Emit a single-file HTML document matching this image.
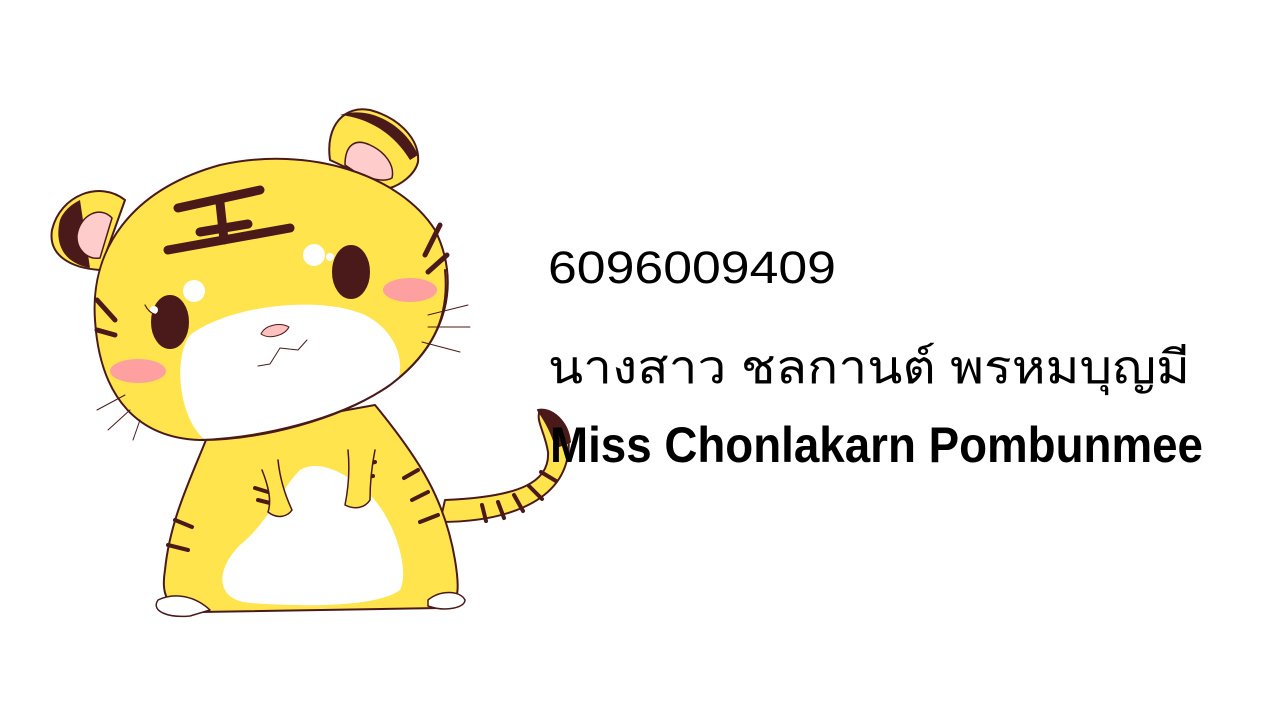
<!DOCTYPE html>
<html><head><meta charset="utf-8"><style>
html,body{margin:0;padding:0;background:#fff;width:1280px;height:720px;overflow:hidden}
</style></head><body>
<svg width="1280" height="720" viewBox="0 0 1280 720" xmlns="http://www.w3.org/2000/svg">
<g stroke="#4a1a1a" stroke-width="2" stroke-linejoin="round" stroke-linecap="round">
<!-- tail -->
<path d="M440 522 C500 522 560 505 568 455 C572 428 558 410 540 410 C535 420 545 432 548 452 C550 482 520 497 445 500 Z" fill="#ffe44d"/>
<path d="M538 410 C552 407 568 422 570 442 L556 447 C552 432 545 420 538 410Z" fill="#4a1a1a"/>
<g stroke-width="4">
<path d="M482 505 L486 521"/><path d="M498 502 L504 518"/><path d="M514 495 L523 511"/><path d="M529 486 L542 499"/><path d="M541 472 L556 481"/>
</g>
<!-- body -->
<path d="M208 435 C190 480 170 520 165 570 C160 600 170 610 200 612 L440 608 C460 606 460 590 455 560 C445 500 420 460 375 405 Z" fill="#ffe44d"/>
<path d="M300 470 C280 490 270 520 240 545 C215 570 215 600 250 603 C320 608 380 605 400 590 C410 570 395 520 370 495 C350 475 320 458 300 470Z" fill="#fff" stroke="none"/>
<g stroke-width="4">
<path d="M168 545 L188 550"/><path d="M175 520 L192 527"/>
<path d="M418 470 L404 478"/><path d="M428 492 L412 500"/><path d="M438 515 L420 522"/>
<path d="M255 488 L268 492"/><path d="M258 500 L270 503"/><path d="M362 465 L375 462"/><path d="M360 478 L373 476"/>
</g>
<path d="M262 470 C268 485 272 500 268 512 C278 520 288 516 292 510 C285 495 280 480 278 460" fill="#ffe44d" stroke-width="1.5"/>
<path d="M348 450 C350 470 348 490 345 505 C355 510 365 508 370 500 C370 480 372 465 375 450" fill="#ffe44d" stroke-width="1.5"/>
<path d="M158 600 C150 612 170 618 190 616 L210 610 C195 596 175 592 158 600Z" fill="#fff" stroke-width="1.5"/>
<path d="M428 606 C445 612 465 608 465 600 C460 590 440 590 428 600Z" fill="#fff" stroke-width="1.5"/>
<!-- ears -->
<path d="M125 200 C100 180 60 195 52 230 C48 255 70 268 100 270 Z" fill="#ffe44d"/>
<path d="M60 220 C55 240 60 262 90 268 L80 200 C70 205 63 212 60 220Z" fill="#4a1a1a" stroke="none"/>
<path d="M112 218 C100 205 80 215 77 235 C76 250 88 260 100 258 Z" fill="#ffcccc" stroke-width="1.5"/>
<path d="M330 160 C325 125 345 105 370 110 C400 118 420 140 418 162 C415 175 400 185 390 188 Z" fill="#ffe44d"/>
<path d="M340 115 C370 105 405 125 418 155 L410 160 C395 135 370 118 340 115Z" fill="#4a1a1a" stroke="none"/>
<path d="M345 165 C345 145 355 138 370 145 C385 152 395 165 392 178 C385 182 375 180 360 175Z" fill="#ffcccc" stroke-width="1.5"/>
<!-- head -->
<path d="M95 320 C90 250 130 190 220 165 C310 145 400 175 435 230 C460 280 450 340 390 385 C340 420 260 440 200 440 C140 438 100 400 95 320Z" fill="#ffe44d"/>
<path d="M190 335 C230 305 320 295 365 315 C395 330 405 360 398 380 C360 410 300 430 205 440 C180 420 172 360 190 335Z" fill="#fff" stroke="none"/>
<path d="M200 440 C260 438 340 420 390 385 C430 355 450 320 445 270" fill="none"/>
<!-- 王 -->
<g stroke-width="9">
<path d="M178 208 L260 190"/><path d="M200 232 L248 224"/><path d="M168 250 L290 228"/><path d="M220 203 L224 240"/>
</g>
<g stroke-width="5">
<path d="M440 225 L425 255"/><path d="M447 255 L428 272"/>
<path d="M97 300 L115 320"/><path d="M97 330 L115 335"/>
</g>
<!-- eyes -->
<ellipse cx="170" cy="322" rx="18" ry="26" fill="#4a1a1a"/><circle cx="154" cy="310" r="4" fill="#fff" stroke="none"/>
<ellipse cx="351" cy="272" rx="18" ry="26" fill="#4a1a1a"/><circle cx="330" cy="257" r="4" fill="#fff" stroke="none"/>
<circle cx="194" cy="291" r="11" fill="#fff" stroke="none"/><circle cx="314" cy="255" r="11" fill="#fff" stroke="none"/>
<path d="M145 305 C150 315 160 318 165 312" fill="none" stroke-width="1.2"/>
<ellipse cx="138" cy="371" rx="28" ry="12" fill="#ffa0a0" stroke="none"/>
<ellipse cx="410" cy="290" rx="27" ry="12" fill="#ffa0a0" stroke="none"/>
<path d="M261 334 C265 325 280 322 289 327 C285 335 270 340 261 334Z" fill="#ffc0c0" stroke-width="1"/>
<path d="M258 366 L270 364 L280 348 L298 350 L307 340" fill="none" stroke-width="1"/>
<g stroke-width="1"><path d="M428 315 L468 305"/><path d="M428 327 L470 327"/><path d="M422 342 L460 352"/>
<path d="M97 410 L125 395"/><path d="M108 430 L130 410"/><path d="M133 440 L140 420"/></g>
</g>
<g font-family="'Liberation Sans','DejaVu Sans',sans-serif" fill="#000">
<text x="548" y="283" font-size="45" textLength="288" lengthAdjust="spacingAndGlyphs">6096009409</text>
<text x="548" y="383" font-size="46" textLength="642" lengthAdjust="spacingAndGlyphs">นางสาว ชลกานต์ พรหมบุญมี</text>
<text x="550" y="462" font-size="50" font-weight="bold" textLength="653" lengthAdjust="spacingAndGlyphs">Miss Chonlakarn Pombunmee</text>
</g>
</svg>
</body></html>
